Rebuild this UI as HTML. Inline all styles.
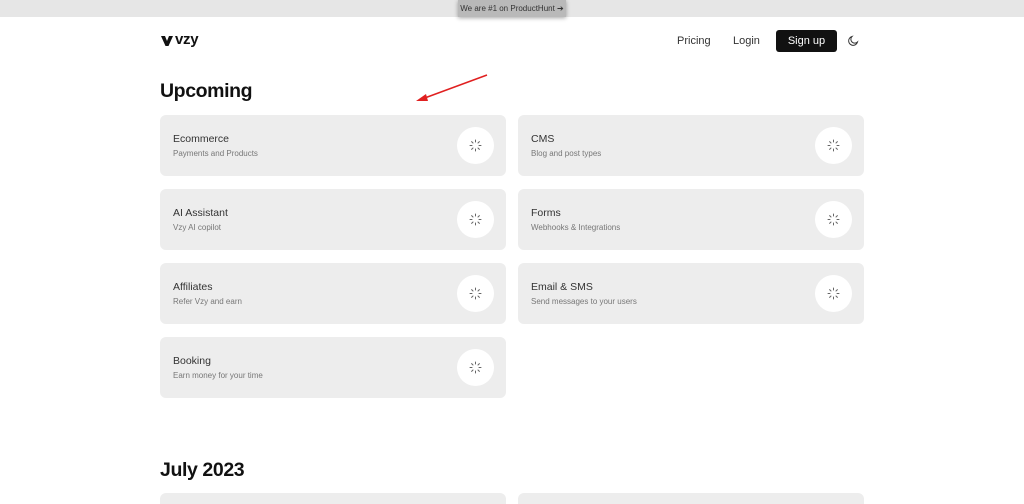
<!DOCTYPE html>
<html><head><meta charset="utf-8"><style>
*{margin:0;padding:0;box-sizing:border-box}
html,body{width:1024px;height:504px;overflow:hidden}
body{background:#fff;font-family:"Liberation Sans",sans-serif;color:#111;position:relative}
.top{position:absolute;left:0;top:0;width:1024px;height:17px;background:#e6e6e6}
.badge{position:absolute;left:458px;top:0;width:108px;height:17px;background:#b9b9b9;box-shadow:0 1px 4px rgba(0,0,0,.35);font-size:8px;color:#333;line-height:17px;text-align:center}
.logo{position:absolute;left:160px;top:31px;font-size:15px;font-weight:bold;letter-spacing:-.3px}
.nav{position:absolute;top:35px;font-size:11px;color:#333}
.btn{position:absolute;left:776px;top:30px;width:61px;height:22px;background:#111;color:#fff;border-radius:3px;font-size:11px;text-align:center;line-height:22px}
h2{position:absolute;left:160px;font-size:19.5px;font-weight:bold;letter-spacing:-.4px}
.card{position:absolute;width:346px;height:61px;background:#ededed;border-radius:6px}
.card .t{position:absolute;left:13px;top:18px;font-size:10.5px;color:#333}
.card .s{position:absolute;left:13px;top:34px;font-size:8px;color:#777}
.card .c{position:absolute;left:297px;top:12px;width:37px;height:37px;border-radius:50%;background:#fff}
.card .c svg{position:absolute;left:12px;top:12px}
</style></head><body>
<div class="top"></div>
<div class="badge">We are #1 on ProductHunt ➔</div>
<svg style="position:absolute;left:161px;top:36px" width="12" height="10"><polygon points="0,0 4,0 6,5 8,0 12,0 7.5,10 4.5,10" fill="#111"/></svg>
<div class="logo" style="left:175px">vzy</div>
<div class="nav" style="left:677px">Pricing</div>
<div class="nav" style="left:733px">Login</div>
<div class="btn">Sign up</div>
<svg style="position:absolute;left:848px;top:35px" width="11" height="11"><path d="M4 1.5 A4.5 4.5 0 1 0 9.5 7 A3.5 3.5 0 0 1 4 1.5 Z" fill="none" stroke="#333" stroke-width="1"/></svg>
<h2 style="top:80px">Upcoming</h2>
<svg style="position:absolute;left:410px;top:70px" width="82" height="36"><line x1="77" y1="5" x2="12" y2="29" stroke="#e02020" stroke-width="1.5"/><polygon points="6,31 16,24 18,31" fill="#e02020"/></svg>
<h2 style="top:459px">July 2023</h2>
<div class="card" style="left:160px;top:493px"></div>
<div class="card" style="left:518px;top:493px"></div>
<svg width="0" height="0" style="position:absolute"><defs><g id="sp" stroke="#666" stroke-width="1" stroke-linecap="round"><line x1="6.5" y1="1" x2="6.5" y2="3"/><line x1="6.5" y1="10" x2="6.5" y2="12"/><line x1="1" y1="6.5" x2="3" y2="6.5"/><line x1="10" y1="6.5" x2="12" y2="6.5"/><line x1="2.6" y1="2.6" x2="4" y2="4"/><line x1="9" y1="9" x2="10.4" y2="10.4"/><line x1="2.6" y1="10.4" x2="4" y2="9"/><line x1="9" y1="4" x2="10.4" y2="2.6"/></g></defs></svg>
<div class="card" style="left:160px;top:115px"><div class="t">Ecommerce</div><div class="s">Payments and Products</div><div class="c"><svg width="13" height="13"><use href="#sp"/></svg></div></div>
<div class="card" style="left:518px;top:115px"><div class="t">CMS</div><div class="s">Blog and post types</div><div class="c"><svg width="13" height="13"><use href="#sp"/></svg></div></div>
<div class="card" style="left:160px;top:189px"><div class="t">AI Assistant</div><div class="s">Vzy AI copilot</div><div class="c"><svg width="13" height="13"><use href="#sp"/></svg></div></div>
<div class="card" style="left:518px;top:189px"><div class="t">Forms</div><div class="s">Webhooks &amp; Integrations</div><div class="c"><svg width="13" height="13"><use href="#sp"/></svg></div></div>
<div class="card" style="left:160px;top:263px"><div class="t">Affiliates</div><div class="s">Refer Vzy and earn</div><div class="c"><svg width="13" height="13"><use href="#sp"/></svg></div></div>
<div class="card" style="left:518px;top:263px"><div class="t">Email &amp; SMS</div><div class="s">Send messages to your users</div><div class="c"><svg width="13" height="13"><use href="#sp"/></svg></div></div>
<div class="card" style="left:160px;top:337px"><div class="t">Booking</div><div class="s">Earn money for your time</div><div class="c"><svg width="13" height="13"><use href="#sp"/></svg></div></div>
</body></html>
